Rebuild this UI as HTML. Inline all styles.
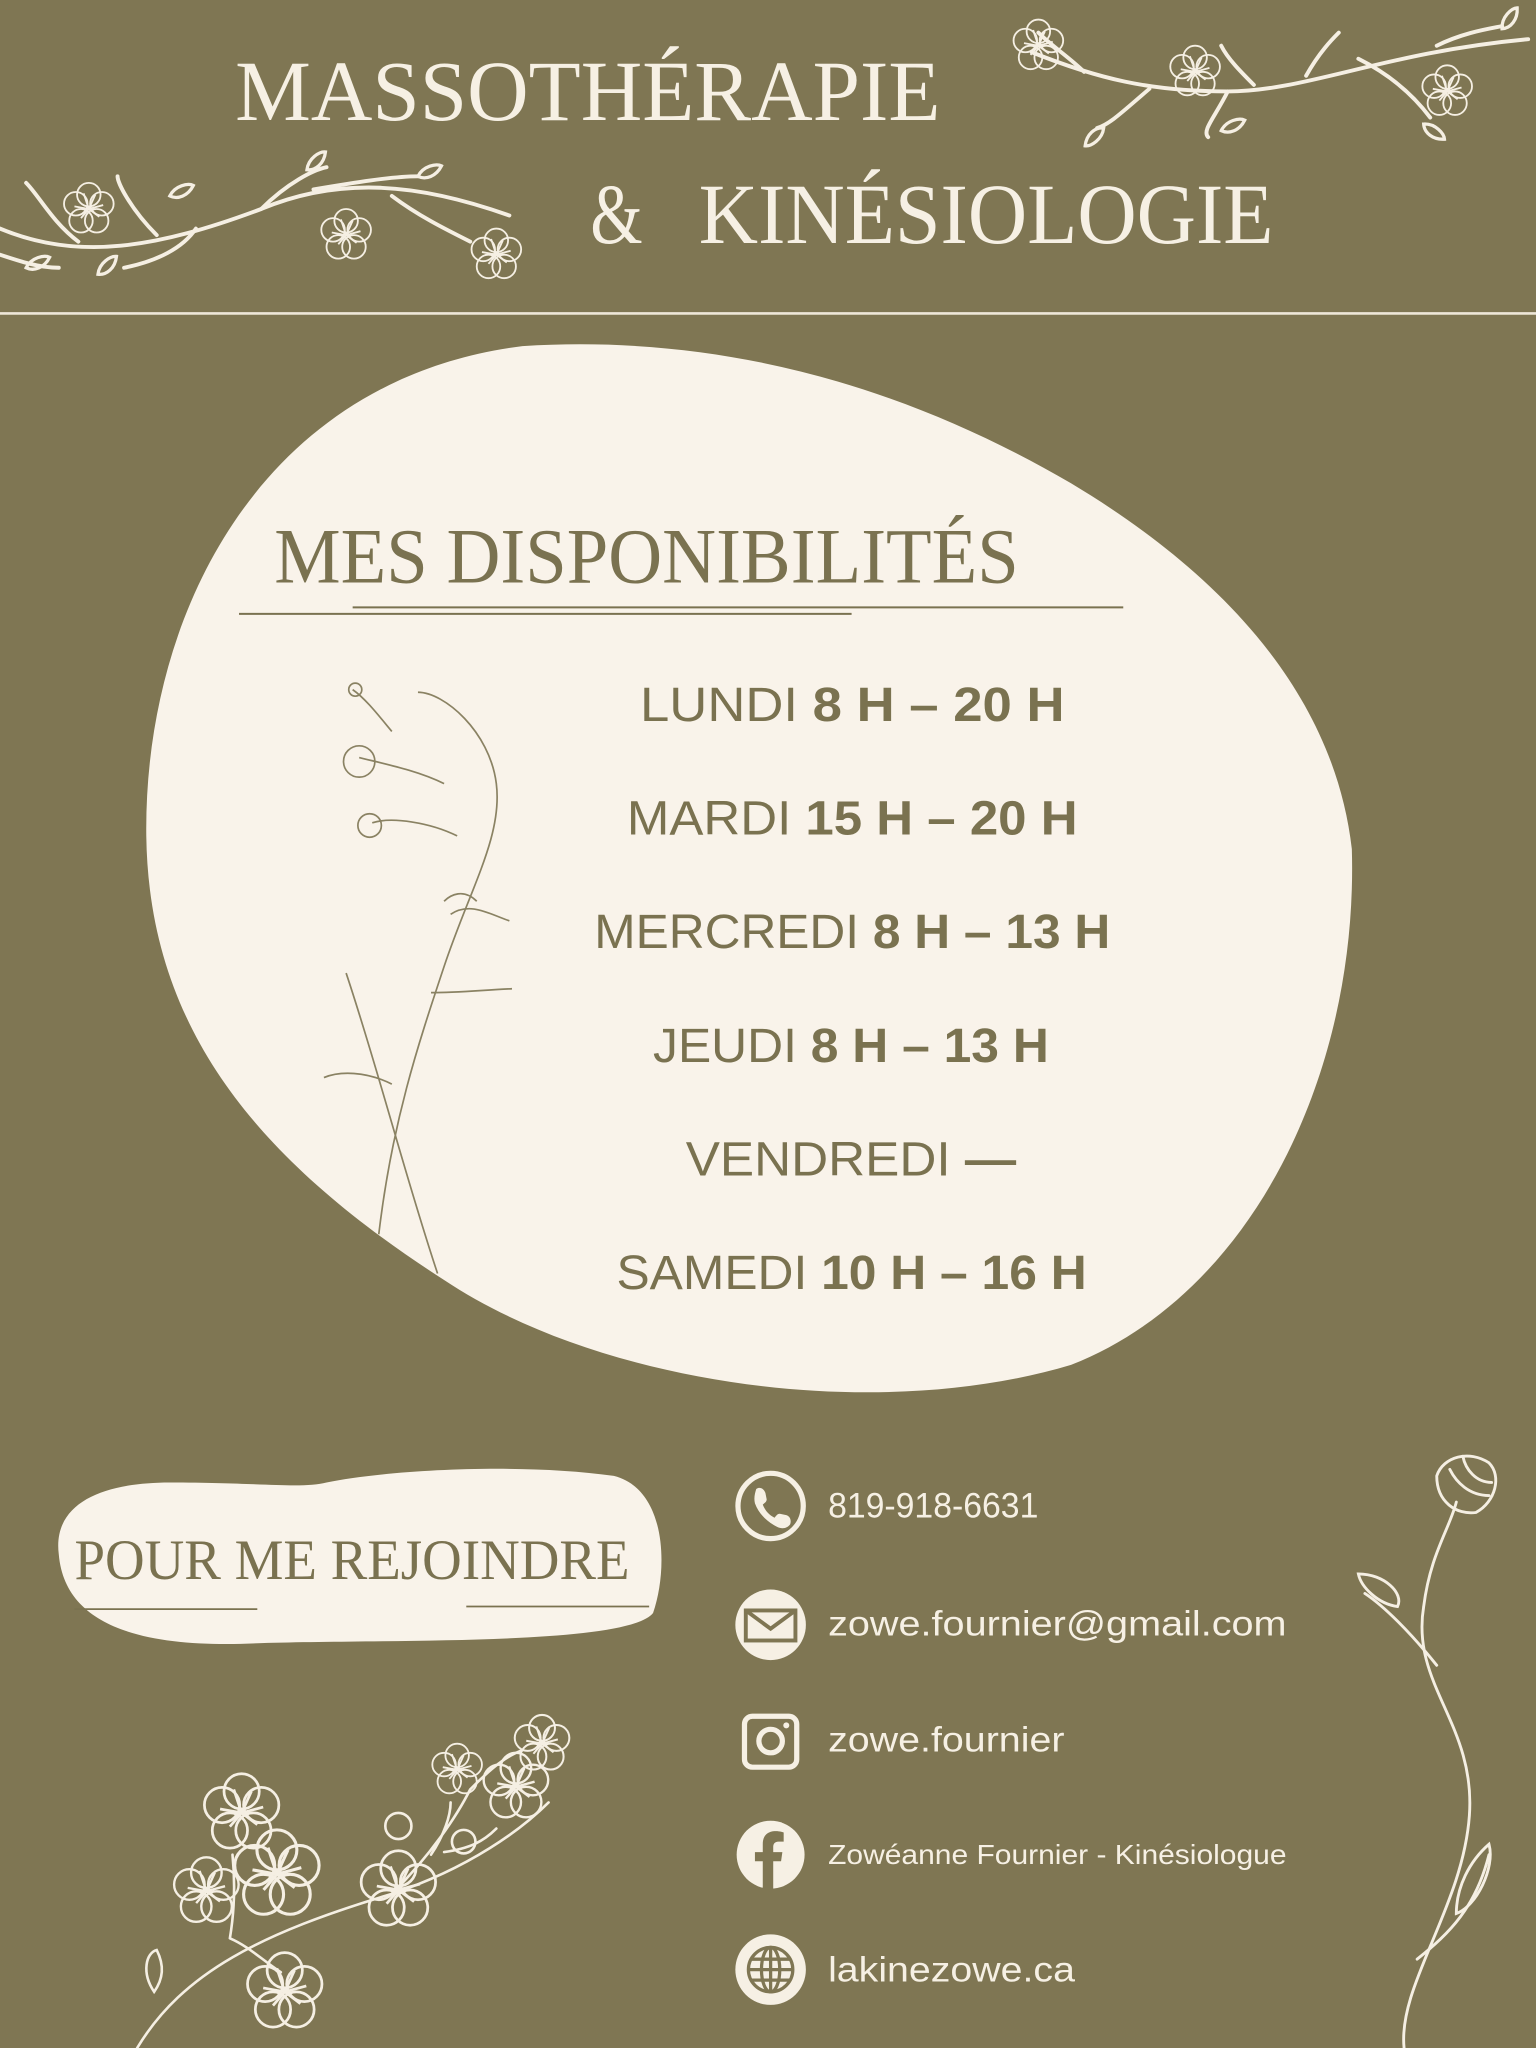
<!DOCTYPE html>
<html><head><meta charset="utf-8"><style>
html,body{margin:0;padding:0;background:#7f7653;width:1536px;height:2048px;overflow:hidden}
svg{display:block}
</style></head><body>
<svg width="1536" height="2048" viewBox="0 0 1536 2048" xmlns="http://www.w3.org/2000/svg">
<defs>
<g id="bl" fill="none" stroke="#f5efe3" stroke-width="1.4">
<circle cx="0" cy="-11" r="9"/><circle cx="10" cy="-4" r="9"/><circle cx="6" cy="9" r="9"/><circle cx="-6" cy="9" r="9"/><circle cx="-10" cy="-4" r="9"/>
<path d="M0 0L-4-12M0 0L5-11M0 0L11-3M0 0L-11-2M0 0L8 6M0 0L-6 7"/>
</g>
<g id="lf" fill="none" stroke="#f5efe3" stroke-width="2.5"><path d="M0 0C4-8 14-10 18-8C14 0 6 3 0 0Z"/></g>
</defs>
<rect width="1536" height="2048" fill="#7f7653"/>
<g transform="scale(1.306122)">
<g fill="#f6f0e4" font-family="'Liberation Serif',serif">
<text x="180" y="92" font-size="66" textLength="540" lengthAdjust="spacingAndGlyphs">MASSOTHÉRAPIE</text>
<text x="452" y="186" font-size="66" textLength="40" lengthAdjust="spacingAndGlyphs">&amp;</text>
<text x="535" y="186" font-size="66" textLength="440" lengthAdjust="spacingAndGlyphs">KINÉSIOLOGIE</text>
</g>
<line x1="0" y1="240" x2="1176" y2="240" stroke="#eee7d8" stroke-width="2"/>
<g fill="none" stroke="#f5efe3" stroke-width="3" stroke-linecap="round">
<path d="M0 175C60 200 120 190 200 160C260 135 320 140 390 165"/>
<path d="M60 185C40 170 30 150 20 140M120 180C100 160 90 140 90 135M200 160C220 140 240 130 250 128M240 145C270 140 300 135 320 135M300 150C320 165 340 175 360 185M150 175C140 190 120 200 95 205M0 195C15 200 30 205 45 205"/>
<path d="M790 40C840 60 880 70 940 70C1000 70 1060 40 1170 30"/>
<path d="M880 68C860 85 850 95 840 98M940 70C930 90 920 100 925 105M1040 45C1060 55 1080 70 1095 90M1000 58C1010 40 1020 30 1025 25M1100 35C1120 25 1140 22 1150 20M830 55C820 45 805 35 795 25M960 65C950 55 940 45 935 35"/>
</g>
<use href="#lf" x="320" y="135"/><use href="#lf" x="235" y="130" transform="rotate(-20 235 130)"/><use href="#lf" x="20" y="205"/><use href="#lf" x="75" y="210" transform="rotate(-20 75 210)"/><use href="#lf" x="130" y="150"/>
<use href="#bl" x="380" y="195"/><use href="#bl" x="265" y="180"/><use href="#bl" x="68" y="160"/>
<use href="#lf" x="845" y="98" transform="rotate(160 845 98)"/><use href="#lf" x="1150" y="22" transform="rotate(-30 1150 22)"/><use href="#lf" x="935" y="100"/><use href="#lf" x="1090" y="95" transform="rotate(60 1090 95)"/>
<use href="#bl" x="795" y="35"/><use href="#bl" x="915" y="55"/><use href="#bl" x="1108" y="70"/>
<path d="M112,640 C110,470 200,290 400,265 C560,255 700,300 820,370 C920,430 1020,520 1035,650 C1040,820 960,990 820,1045 C670,1090 460,1060 340,980 C200,890 114,790 112,640Z" fill="#f9f3ea"/>
<text x="210" y="446" fill="#7a7250" font-family="'Liberation Serif',serif" font-size="60" textLength="570" lengthAdjust="spacingAndGlyphs">MES DISPONIBILITÉS</text>
<line x1="270" y1="465" x2="860" y2="465" stroke="#7a7250" stroke-width="1.5"/>
<line x1="183" y1="470" x2="652" y2="470" stroke="#7a7250" stroke-width="1.5"/>
<g fill="#7a7250" font-family="'Liberation Sans',sans-serif" font-size="37">
<text x="490" y="552" textLength="325" lengthAdjust="spacingAndGlyphs">LUNDI <tspan font-weight="bold">8 H – 20 H</tspan></text>
<text x="480" y="639" textLength="345" lengthAdjust="spacingAndGlyphs">MARDI <tspan font-weight="bold">15 H – 20 H</tspan></text>
<text x="455" y="726" textLength="395" lengthAdjust="spacingAndGlyphs">MERCREDI <tspan font-weight="bold">8 H – 13 H</tspan></text>
<text x="500" y="813" textLength="303" lengthAdjust="spacingAndGlyphs">JEUDI <tspan font-weight="bold">8 H – 13 H</tspan></text>
<text x="525" y="900" textLength="253" lengthAdjust="spacingAndGlyphs">VENDREDI   <tspan font-weight="bold">—</tspan></text>
<text x="472" y="987" textLength="360" lengthAdjust="spacingAndGlyphs">SAMEDI <tspan font-weight="bold">10 H – 16 H</tspan></text>
</g>
<g fill="none" stroke="#8a8263" stroke-width="1.3">
<path d="M290 945C300 860 320 800 340 740C360 680 385 640 380 600C375 560 340 530 320 530"/>
<path d="M335 975C310 900 290 820 265 745M300 830C280 820 260 820 248 825M330 760C350 760 370 758 392 757M345 700C360 690 375 700 390 705M350 640C330 630 300 625 285 630M340 600C320 590 295 585 275 580M300 560C290 548 280 535 270 528M365 690C355 680 345 685 340 690"/>
<circle cx="275" cy="583" r="12"/><circle cx="283" cy="632" r="9"/><circle cx="272" cy="528" r="5"/>
</g>
<path d="M45,1190 C40,1150 80,1135 130,1135 C200,1135 230,1140 250,1135 C300,1125 400,1120 470,1130 C510,1140 512,1200 500,1235 C480,1260 300,1255 200,1258 C120,1262 50,1250 45,1190Z" fill="#f9f3ea"/>
<text x="57" y="1209" fill="#7a7250" font-family="'Liberation Serif',serif" font-size="44" textLength="425" lengthAdjust="spacingAndGlyphs">POUR ME REJOINDRE</text>
<line x1="57" y1="1232" x2="197" y2="1232" stroke="#7a7250" stroke-width="1.3"/>
<line x1="357" y1="1230" x2="497" y2="1230" stroke="#7a7250" stroke-width="1.3"/>
<g fill="#f6f0e4" font-family="'Liberation Sans',sans-serif">
<circle cx="590" cy="1153" r="25" fill="none" stroke="#f6f0e4" stroke-width="4"/>
<path d="M579 1140c3-2 6 0 7 3l1 5c0 2-2 3-3 4 2 5 5 8 9 10 1-1 2-3 4-3l5 1c3 1 4 4 3 7-2 3-6 4-10 2-8-4-14-10-17-18-1-4 0-8 1-11z"/>
<circle cx="590" cy="1244" r="27"/>
<rect x="571" y="1233" width="38" height="23" fill="none" stroke="#7f7653" stroke-width="3"/>
<path d="M571 1233l19 14 19-14" fill="none" stroke="#7f7653" stroke-width="3"/>
<rect x="570" y="1314" width="40" height="39" rx="6" fill="none" stroke="#f6f0e4" stroke-width="4"/>
<circle cx="590" cy="1333" r="9" fill="none" stroke="#f6f0e4" stroke-width="4"/>
<circle cx="602" cy="1321" r="2.3"/>
<circle cx="590" cy="1420" r="26"/>
<path d="M584 1446v-21h-6v-7h6v-6c0-7 4-10 10-10 3 0 6 1 6 1v7h-4c-3 0-4 2-4 4v4h7l-1 7h-6v22z" fill="#7f7653"/>
<circle cx="590" cy="1508" r="27"/>
<g fill="none" stroke="#7f7653" stroke-width="2.5"><circle cx="590" cy="1508" r="17"/><ellipse cx="590" cy="1508" rx="7" ry="17"/><path d="M573 1508h34M575 1500h30M575 1516h30M590 1491v34"/></g>
<text x="634" y="1162" font-size="27" textLength="161" lengthAdjust="spacingAndGlyphs">819-918-6631</text>
<text x="634" y="1252" font-size="27" textLength="351" lengthAdjust="spacingAndGlyphs">zowe.fournier@gmail.com</text>
<text x="634" y="1341" font-size="27" textLength="181" lengthAdjust="spacingAndGlyphs">zowe.fournier</text>
<text x="634" y="1427" font-size="21" textLength="351" lengthAdjust="spacingAndGlyphs">Zowéanne Fournier - Kinésiologue</text>
<text x="634" y="1517" font-size="27" textLength="189" lengthAdjust="spacingAndGlyphs">lakinezowe.ca</text>
</g>
<g fill="none" stroke="#f5efe3" stroke-width="2" stroke-linecap="round">
<path d="M105 1568C140 1510 200 1480 300 1450C360 1430 400 1400 420 1380M176 1484C180 1460 180 1440 178 1420M176 1484C190 1490 200 1500 215 1510M300 1450C330 1420 350 1390 360 1370M330 1420C340 1405 345 1390 345 1380M360 1370C370 1360 385 1345 400 1340M340 1418C360 1415 370 1410 380 1400"/>
<path d="M118 1525C108 1510 112 1495 120 1493C126 1505 125 1515 118 1525Z"/>
</g>
<g transform="translate(185 1388) scale(1.5)"><use href="#bl"/></g>
<g transform="translate(212 1435) scale(1.7)"><use href="#bl"/></g>
<g transform="translate(158 1448) scale(1.3)"><use href="#bl"/></g>
<g transform="translate(218 1525) scale(1.5)"><use href="#bl"/></g>
<g transform="translate(305 1447) scale(1.5)"><use href="#bl"/></g>
<g transform="translate(395 1368) scale(1.3)"><use href="#bl"/></g>
<g transform="translate(350 1355) scale(1)"><use href="#bl"/></g>
<g transform="translate(415 1335) scale(1.1)"><use href="#bl"/></g>
<circle cx="305" cy="1398" r="10" fill="none" stroke="#f5efe3" stroke-width="2"/>
<circle cx="355" cy="1410" r="9" fill="none" stroke="#f5efe3" stroke-width="2"/>
<g fill="none" stroke="#f5efe3" stroke-width="2.2" stroke-linecap="round">
<path d="M1075 1568C1070 1520 1120 1460 1125 1390C1130 1320 1080 1290 1090 1230C1095 1190 1110 1170 1115 1150"/>
<path d="M1100 1275C1080 1250 1060 1230 1045 1220M1085 1500C1110 1480 1130 1460 1140 1420"/>
<path d="M1040 1205C1060 1205 1075 1220 1070 1230C1055 1228 1042 1215 1040 1205Z"/>
<path d="M1140 1412C1145 1430 1130 1460 1115 1465C1115 1445 1125 1425 1140 1412Z"/>
<path d="M1100 1130C1105 1115 1125 1110 1140 1120C1150 1130 1145 1150 1130 1158C1115 1160 1100 1150 1100 1130Z"/>
<path d="M1110 1125C1115 1135 1125 1145 1140 1145M1120 1115C1122 1125 1130 1135 1142 1135"/>
</g>
</g>
</svg>
</body></html>
